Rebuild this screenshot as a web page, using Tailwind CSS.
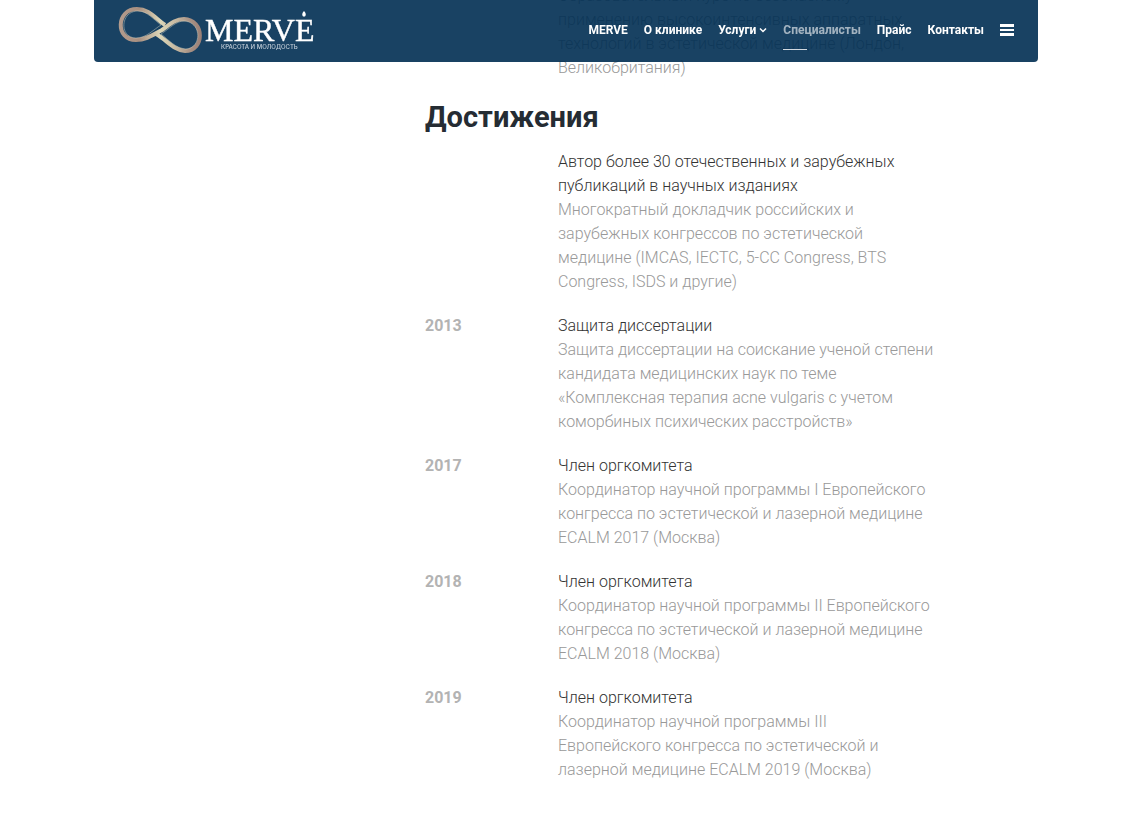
<!DOCTYPE html>
<html lang="ru">
<head>
    <meta charset="UTF-8">
    <meta name="viewport" content="width=device-width, initial-scale=1.0">
    <script src="https://cdn.jsdelivr.net/npm/@tailwindcss/browser@4"></script>
    <title>MERVE - Специалисты</title>
</head>
<body class="bg-white pr-[13px] font-['Roboto',sans-serif] text-base font-light text-[#999999] overflow-x-hidden">

    <!-- navbar -->
    <header class="fixed top-0 left-0 right-[13px] z-10 px-4">
        <div class="mx-auto flex h-[62px] max-w-[944px] items-center justify-between rounded-b bg-[#002d52]/90 px-6">
            <a href="#" aria-label="MERVE" class="flex items-center">
                <svg class="h-[62px] w-[197px]" viewBox="0 0 197 62">
                    <defs>
                        <linearGradient id="gold" gradientUnits="userSpaceOnUse" x1="0" y1="0" x2="84" y2="0">
                            <stop offset="0" stop-color="#b39c8e"/>
                            <stop offset="0.25" stop-color="#a88f80"/>
                            <stop offset="0.5" stop-color="#dcd6b8"/>
                            <stop offset="0.7" stop-color="#c5b7a0"/>
                            <stop offset="0.85" stop-color="#a89285"/>
                            <stop offset="1" stop-color="#9a7f76"/>
                        </linearGradient>
                    </defs>
                    <path d="M47 25 C37 18 31 9 19 9 C-2 9 -3 40 18 40 C29 40 36 34 44 30 C51 25 57 19 66 19 C87 20 87 51 67 51 C55 50 49 40 38 34" fill="none" stroke="url(#gold)" stroke-width="4"/>
                    <path d="M43 25 C35 19 29 11 20 11 C2 11 1 38 18 38 C28 38 35 30 43 25 M43 34 C51 29 58 21 66 21 C84 22 84 48 68 49 C57 48 51 40 43 34" fill="none" stroke="#f0ead2" stroke-opacity="0.5" stroke-width="0.800"/>
                    <text x="87" y="41" font-size="32" fill="#ffffff" stroke="#ffffff" stroke-width="0.400" font-family="Liberation Serif, serif">MERVE</text>
                    <path d="M186 11 Q189 14 187 16.500 H185 Q183 14 186 11Z" fill="#ffffff"/>
                    <text x="103" y="49" font-size="6" font-weight="500" fill="#c5d0da" font-family="Inter, sans-serif">КРАСОТА И МОЛОДОСТЬ</text>
                </svg>
            </a>
            <nav class="flex items-center gap-4 pb-0.5 text-xs font-bold text-white">
                <a href="#">MERVE</a>
                <a href="#">О клинике</a>
                <a href="#" class="flex items-center gap-[3px]">Услуги
                    <svg class="h-2 w-2" viewBox="0 0 8 8" fill="none" stroke="currentColor" stroke-width="1.500"><path d="M1 2.500 L4 5.500 L7 2.500"/></svg>
                </a>
                <a href="#" class="relative text-white/60">Специалисты
                    <span class="absolute -bottom-3 left-0 h-px w-6 bg-white/80"></span>
                </a>
                <a href="#">Прайс</a>
                <a href="#">Контакты</a>
                <button aria-label="Меню">
                    <svg class="h-3 w-3.5" viewBox="0 0 14 12" fill="currentColor"><path d="M0 0h14v3H0zM0 5h14v2H0zM0 9h14v3H0z"/></svg>
                </button>
            </nav>
        </div>
    </header>

    <main class="mx-auto -mt-4 max-w-[944px] pl-[331px]">
        <section class="pl-[133px]">
            <p class="max-w-[376px]">Образовательный курс по безопасному применению высокоинтенсивных аппаратных технологий в эстетической медицине (Лондон, Великобритания)</p>
        </section>

        <section>
            <h2 class="pt-5 pb-4 text-[29px] leading-[34px] font-bold text-[#252c33]">Достижения</h2>
            <div class="space-y-5">
                <div class="grid grid-cols-[133px_1fr]">
                    <div class="font-bold text-[#b3b3b3]"></div>
                    <div class="max-w-[376px]">
                        <h3 class="text-[#333333]">Автор более 30 отечественных и зарубежных публикаций в научных изданиях</h3>
                        <p>Многократный докладчик российских и зарубежных конгрессов по эстетической медицине (IMCAS, IECTC, 5-CC Congress, BTS Congress, ISDS и другие)</p>
                    </div>
                </div>
                <div class="grid grid-cols-[133px_1fr]">
                    <div class="font-bold text-[#b3b3b3]">2013</div>
                    <div class="max-w-[376px]">
                        <h3 class="text-[#333333]">Защита диссертации</h3>
                        <p>Защита диссертации на соискание ученой степени кандидата медицинских наук по теме «Комплексная терапия acne vulgaris с учетом коморбиных психических расстройств»</p>
                    </div>
                </div>
                <div class="grid grid-cols-[133px_1fr]">
                    <div class="font-bold text-[#b3b3b3]">2017</div>
                    <div class="max-w-[376px]">
                        <h3 class="text-[#333333]">Член оргкомитета</h3>
                        <p>Координатор научной программы I Европейского конгресса по эстетической и лазерной медицине ECALM 2017 (Москва)</p>
                    </div>
                </div>
                <div class="grid grid-cols-[133px_1fr]">
                    <div class="font-bold text-[#b3b3b3]">2018</div>
                    <div class="max-w-[376px]">
                        <h3 class="text-[#333333]">Член оргкомитета</h3>
                        <p>Координатор научной программы II Европейского конгресса по эстетической и лазерной медицине ECALM 2018 (Москва)</p>
                    </div>
                </div>
                <div class="grid grid-cols-[133px_1fr]">
                    <div class="font-bold text-[#b3b3b3]">2019</div>
                    <div class="max-w-[376px]">
                        <h3 class="text-[#333333]">Член оргкомитета</h3>
                        <p>Координатор научной программы III<br>Европейского конгресса по эстетической и лазерной медицине ECALM 2019 (Москва)</p>
                    </div>
                </div>
            </div>
        </section>
    </main>

</body>
</html>
